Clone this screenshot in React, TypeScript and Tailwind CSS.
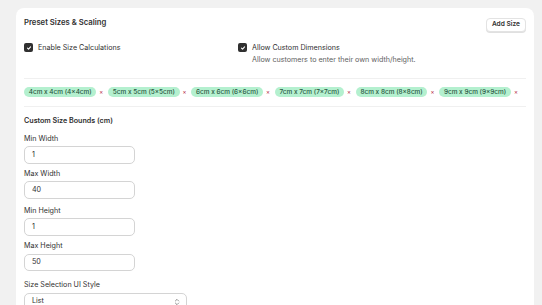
import { ChevronsUpDown } from 'lucide-react'

const chips = [
  '4cm x 4cm (4×4cm)',
  '5cm x 5cm (5×5cm)',
  '6cm x 6cm (6×6cm)',
  '7cm x 7cm (7×7cm)',
  '8cm x 8cm (8×8cm)',
  '9cm x 9cm (9×9cm)',
]

function Check() {
  return (
    <span className="flex h-[9px] w-[9px] shrink-0 items-center justify-center rounded-[2px] bg-[#303030]">
      <svg viewBox="0 0 10 10" className="h-[6px] w-[6px]" fill="none" stroke="white" strokeWidth="1.8" strokeLinecap="round" strokeLinejoin="round">
        <path d="M2.5 5.2 4.3 7 7.6 3.2" />
      </svg>
    </span>
  )
}

function Field({ label, value, mt }: { label: string; value: string; mt: string }) {
  return (
    <div className={mt}>
      <div className="h-[10px] text-[7.15px] leading-[10px] text-[#303030]">{label}</div>
      <div className="mt-[2.7px] flex h-[17.6px] w-[111px] items-center rounded-[5px] border border-[#d4d4d4] bg-white pl-[7px] text-[7.15px] text-[#303030]">
        {value}
      </div>
    </div>
  )
}

export default function App() {
  return (
    <div className="min-h-screen bg-[#f1f1f1] pl-4 pr-2 pt-2 font-['Inter',sans-serif]">
      <div className="rounded-[8px] bg-white p-2 pb-10 shadow-[0_1px_0_rgba(0,0,0,0.06)]">
        <div className="flex h-4 items-start justify-between">
          <h2 className="mt-[1.5px] text-[7.7px] font-semibold leading-[10px] text-[#303030]">Preset Sizes &amp; Scaling</h2>
          <button className="mt-[1.7px] h-[14px] rounded-[4px] border border-[#e3e3e3] bg-white px-[5px] text-[6.6px] font-semibold leading-none text-[#303030] shadow-[0_1px_0_rgba(0,0,0,0.12)]">
            Add Size
          </button>
        </div>

        <div className="mt-[10.5px] grid grid-cols-[214px_1fr]">
          <label className="flex items-start gap-[5px]">
            <span className="mt-[0.8px]"><Check /></span>
            <span className="text-[7.15px] leading-[10px] text-[#303030]">Enable Size Calculations</span>
          </label>
          <div>
            <label className="flex items-start gap-[5px]">
              <span className="mt-[0.8px]"><Check /></span>
              <span className="text-[7.15px] leading-[10px] text-[#303030]">Allow Custom Dimensions</span>
            </label>
            <p className="mt-[2.5px] pl-[14px] text-[7.15px] leading-[10px] text-[#616161]">
              Allow customers to enter their own width/height.
            </p>
          </div>
        </div>

        <div className="mt-[12.5px] h-px bg-[#f0f0f0]" />

        <div className="mt-[8px] flex items-center whitespace-nowrap">
          {chips.map((c) => (
            <div key={c} className="mr-[4.8px] flex shrink-0 items-center">
              <span className="flex h-[10.5px] items-center rounded-full bg-[#b4f0cf] px-[4.7px] text-[6.45px] font-medium leading-none text-[#29573f]">
                {c}
              </span>
              <span className="ml-[3px] text-[6px] leading-none text-[#b3263e]">×</span>
            </div>
          ))}
        </div>

        <div className="mt-[9px] h-px bg-[#f0f0f0]" />

        <h3 className="mt-[8.7px] text-[7.15px] font-semibold leading-[10px] text-[#303030]">Custom Size Bounds (cm)</h3>

        <Field label="Min Width" value="1" mt="mt-[8px]" />
        <Field label="Max Width" value="40" mt="mt-[4.7px]" />
        <Field label="Min Height" value="1" mt="mt-[6.7px]" />
        <Field label="Max Height" value="50" mt="mt-[5px]" />

        <div className="mt-[9px]">
          <div className="h-[10px] text-[7.15px] leading-[10px] text-[#303030]">Size Selection UI Style</div>
          <div className="mt-[2.7px] flex h-[17.6px] w-[163px] items-center justify-between rounded-[5px] border border-[#d4d4d4] bg-white pl-[7px] pr-[5px] text-[7.15px] text-[#303030]">
            <span>List</span>
            <ChevronsUpDown className="h-[8px] w-[8px] text-[#616161]" strokeWidth={2} />
          </div>
        </div>
      </div>
    </div>
  )
}
